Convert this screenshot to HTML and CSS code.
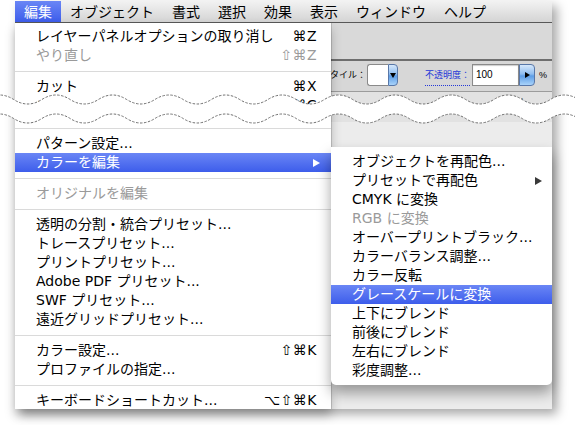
FILE: index.html
```html
<!DOCTYPE html>
<html lang="ja">
<head>
<meta charset="utf-8">
<link rel="stylesheet" href="styles.css">
</head>
<body>
<div class="stage">
  <div class="window">
    <div class="menubar">
      <span class="mb-item active">編集</span>
      <span class="mb-item">オブジェクト</span>
      <span class="mb-item">書式</span>
      <span class="mb-item">選択</span>
      <span class="mb-item">効果</span>
      <span class="mb-item">表示</span>
      <span class="mb-item">ウィンドウ</span>
      <span class="mb-item">ヘルプ</span>
    </div>
    <div class="wincontent">
      <div class="band"></div>
      <div class="toolbar">
        <span class="tlabel style-label">スタイル：</span>
        <span class="select"><span class="select-field"></span><span class="aqua-btn"><i class="tri-down"></i></span></span>
        <span class="tlabel link">不透明度：</span>
        <span class="numfield">100</span>
        <span class="aqua-btn btn-right"><i class="tri-right"></i></span>
        <span class="tlabel pct">%</span>
      </div>
      <div class="canvas-top"><span class="peach"></span><span class="plus">+</span></div>
      <div class="canvas"></div>
    </div>

    <div class="menu menu-main">
      <div class="part-top">
        <div class="item"><span>レイヤーパネルオプションの取り消し</span><span class="sc">⌘Z</span></div>
        <div class="item dis"><span>やり直し</span><span class="sc">⇧⌘Z</span></div>
        <div class="sep"></div>
        <div class="item"><span>カット</span><span class="sc">⌘X</span></div>
        <div class="item"><span>コピー</span><span class="sc">⌘C</span></div>
      </div>
      <div class="part-bottom">
        <div class="sep"></div>
        <div class="item"><span>パターン設定...</span></div>
        <div class="item hl arrow-row"><span>カラーを編集</span><i class="arrow white"></i></div>
        <div class="sep"></div>
        <div class="item dis"><span>オリジナルを編集</span></div>
        <div class="sep"></div>
        <div class="item"><span>透明の分割・統合プリセット...</span></div>
        <div class="item"><span>トレースプリセット...</span></div>
        <div class="item"><span>プリントプリセット...</span></div>
        <div class="item"><span>Adobe PDF プリセット...</span></div>
        <div class="item"><span>SWF プリセット...</span></div>
        <div class="item"><span>遠近グリッドプリセット...</span></div>
        <div class="sep"></div>
        <div class="item"><span>カラー設定...</span><span class="sc">⇧⌘K</span></div>
        <div class="item"><span>プロファイルの指定...</span></div>
        <div class="sep"></div>
        <div class="item"><span>キーボードショートカット...</span><span class="sc">⌥⇧⌘K</span></div>
      </div>
    </div>

    <div class="menu menu-sub">
      <div class="item"><span>オブジェクトを再配色...</span></div>
      <div class="item arrow-row sub-arrow"><span>プリセットで再配色</span><i class="arrow"></i></div>
      <div class="item"><span>CMYK に変換</span></div>
      <div class="item dis"><span>RGB に変換</span></div>
      <div class="item"><span>オーバープリントブラック...</span></div>
      <div class="item"><span>カラーバランス調整...</span></div>
      <div class="item"><span>カラー反転</span></div>
      <div class="item hl"><span>グレースケールに変換</span></div>
      <div class="item"><span>上下にブレンド</span></div>
      <div class="item"><span>前後にブレンド</span></div>
      <div class="item"><span>左右にブレンド</span></div>
      <div class="item"><span>彩度調整...</span></div>
    </div>
  </div>

  <svg class="tear" width="575" height="140" viewBox="0 0 575 140">
    <path class="tear-fill" d="M-14.6 99.5 Q-0.475 90.5 13.65 99.5 T41.9 99.5 T70.15 99.5 T98.4 99.5 T126.65 99.5 T154.9 99.5 T183.15 99.5 T211.4 99.5 T239.65 99.5 T267.9 99.5 T296.15 99.5 T324.4 99.5 T352.65 99.5 T380.9 99.5 T409.15 99.5 T437.4 99.5 T465.65 99.5 T493.9 99.5 T522.15 99.5 T550.4 99.5 T578.65 99.5 T606.9 99.5 L606.9 118.5 Q592.775 127.5 578.65 118.5 T550.4 118.5 T522.15 118.5 T493.9 118.5 T465.65 118.5 T437.4 118.5 T409.15 118.5 T380.9 118.5 T352.65 118.5 T324.4 118.5 T296.15 118.5 T267.9 118.5 T239.65 118.5 T211.4 118.5 T183.15 118.5 T154.9 118.5 T126.65 118.5 T98.4 118.5 T70.15 118.5 T41.9 118.5 T13.65 118.5 T-14.6 118.5 Z"/>
    <path class="tear-line" d="M-14.6 99.5 Q-0.475 90.5 13.65 99.5 T41.9 99.5 T70.15 99.5 T98.4 99.5 T126.65 99.5 T154.9 99.5 T183.15 99.5 T211.4 99.5 T239.65 99.5 T267.9 99.5 T296.15 99.5 T324.4 99.5 T352.65 99.5 T380.9 99.5 T409.15 99.5 T437.4 99.5 T465.65 99.5 T493.9 99.5 T522.15 99.5 T550.4 99.5 T578.65 99.5 T606.9 99.5"/>
    <path class="tear-line" d="M-14.6 118.5 Q-0.475 109.5 13.65 118.5 T41.9 118.5 T70.15 118.5 T98.4 118.5 T126.65 118.5 T154.9 118.5 T183.15 118.5 T211.4 118.5 T239.65 118.5 T267.9 118.5 T296.15 118.5 T324.4 118.5 T352.65 118.5 T380.9 118.5 T409.15 118.5 T437.4 118.5 T465.65 118.5 T493.9 118.5 T522.15 118.5 T550.4 118.5 T578.65 118.5 T606.9 118.5"/>
  </svg>
</div>
</body>
</html>
```

FILE: styles.css
```css
* { box-sizing: border-box; margin: 0; padding: 0; }

html, body {
  width: 575px;
  height: 425px;
  overflow: hidden;
  background: #fff;
}

body {
  font-family: "DejaVu Sans", "Noto Sans CJK JP", sans-serif;
  font-size: 14px;
  color: #000;
}

.stage {
  position: relative;
  width: 575px;
  height: 425px;
  padding: 1px 0 0 15px;
}

.window {
  position: relative;
  width: 537px;
  height: 408px;
  background: #ececec;
  box-shadow: 5px 5px 10px rgba(0, 0, 0, 0.35);
  display: flex;
  flex-direction: column;
}

/* menu bar */
.menubar {
  height: 22px;
  flex: none;
  display: flex;
  background: linear-gradient(#f2f2f2, #d4d4d4);
  border-bottom: 1px solid #585858;
  font-family: "Noto Sans CJK JP", sans-serif;
  line-height: 21px;
}

.mb-item { padding: 0 9px; white-space: nowrap; }

.mb-item.active {
  background: linear-gradient(#6a86f5, #3d5deb);
  color: #fff;
}

/* window content behind the menus */
.wincontent {
  flex: 1;
  display: flex;
  flex-direction: column;
}

.band {
  height: 38px;
  flex: none;
  background: #d9d9d9;
  border-bottom: 2px solid #6e6e6e;
}

.toolbar {
  height: 31px;
  flex: none;
  display: flex;
  align-items: flex-start;
  padding: 3px 0 0 306px;
  background: #d7d7d7;
  border-bottom: 1px solid #9c9c9c;
}

.tlabel {
  font-family: "Noto Sans CJK JP", sans-serif;
  font-size: 9px;
  line-height: 22px;
  height: 22px;
  white-space: nowrap;
}

.style-label { width: 46px; }

.select {
  display: flex;
  height: 22px;
  width: 31px;
}

.select-field {
  width: 21px;
  height: 22px;
  background: #fff;
  border: 1px solid #8a8a8a;
  border-right: none;
  border-radius: 3px 0 0 3px;
}

.aqua-btn {
  width: 10px;
  height: 22px;
  display: flex;
  align-items: center;
  justify-content: center;
  background: linear-gradient(#d6e8fb, #8fbdf0 45%, #5d9de6 55%, #a9d3fa);
  border: 1px solid #5877a8;
  border-radius: 0 4px 4px 0;
}

.tri-down {
  width: 0;
  height: 0;
  border-top: 5px solid #000;
  border-left: 3px solid transparent;
  border-right: 3px solid transparent;
}

.link {
  margin-left: 27px;
  width: 45px;
  color: #2438d8;
  line-height: 21px;
  height: 22px;
  border-bottom: 1px dotted #2438d8;
}

.numfield {
  margin-left: 2px;
  width: 47px;
  height: 22px;
  background: #fff;
  border: 1px solid #8a8a8a;
  box-shadow: inset 0 1px 1px rgba(0, 0, 0, 0.2);
  font-family: "Liberation Sans", sans-serif;
  font-size: 10px;
  line-height: 20px;
  padding-left: 3px;
}

.btn-right { width: 16px; }

.tri-right {
  width: 0;
  height: 0;
  border-left: 5px solid #000;
  border-top: 3px solid transparent;
  border-bottom: 3px solid transparent;
}

.pct {
  margin-left: 4px;
  font-family: "Liberation Sans", sans-serif;
}

.canvas-top {
  height: 30px;
  flex: none;
  display: flex;
  align-items: flex-start;
  gap: 7px;
  padding: 5px 0 0 482px;
  background: #e2e2e2;
}

.peach {
  width: 13px;
  height: 12px;
  background: #e8b48e;
  border-radius: 2px;
}

.plus {
  font-size: 12px;
  line-height: 10px;
  color: #444;
}

.canvas { flex: 1; background: #ececec; }

/* menus */
.menu {
  position: absolute;
  background: #fff;
}

.menu-main {
  left: 0;
  top: 22px;
  width: 316px;
  bottom: 0;
  display: flex;
  flex-direction: column;
  box-shadow: 1px 0 0 rgba(0, 0, 0, 0.14), 0 6px 10px rgba(0, 0, 0, 0.25);
}

.part-top {
  height: 99px;
  flex: none;
  overflow: hidden;
  padding-top: 4px;
}

.item {
  height: 19px;
  line-height: 19px;
  padding: 0 14px 0 21px;
  display: flex;
  justify-content: space-between;
  align-items: center;
  white-space: nowrap;
}

.item.hl {
  background: linear-gradient(#6a86f5, #3d5deb);
  color: #fff;
}

.item.dis { color: #9a9a9a; }

.sc { letter-spacing: 0.5px; }

.sep {
  height: 12px;
  padding-top: 6px;
}

.sep::before {
  content: "";
  display: block;
  height: 1px;
  background: #dadada;
}

.arrow-row { padding-right: 11px; }

.arrow {
  width: 0;
  height: 0;
  border-left: 7px solid #3a3a3a;
  border-top: 4.5px solid transparent;
  border-bottom: 4.5px solid transparent;
}

.arrow.white { border-left-color: #fff; }

.menu-sub {
  left: 316px;
  top: 146px;
  width: 221px;
  padding: 5px 0;
  border-radius: 0 0 5px 5px;
  box-shadow: 0 8px 14px rgba(0, 0, 0, 0.36);
}

.sub-arrow { padding-right: 10px; }

/* torn-paper overlay */
.tear {
  position: absolute;
  left: 0;
  top: 0;
  pointer-events: none;
}

.tear-fill { fill: #fff; }

.tear-line {
  fill: none;
  stroke: #707070;
  stroke-width: 1;
  stroke-dasharray: 2.5 1.5;
}
```
